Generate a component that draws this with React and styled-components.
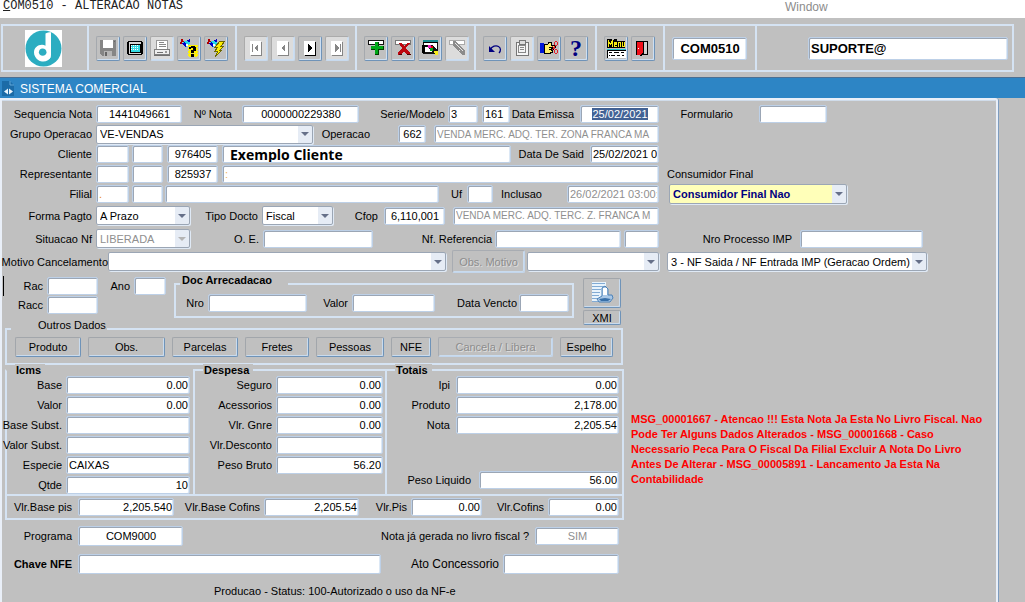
import React, { useEffect, useRef } from "react";
import styled, { createGlobalStyle } from "styled-components";

const GlobalStyle = createGlobalStyle`
  * {
    box-sizing: border-box;
  }
  body {
    margin: 0;
    background: #c0c0c0;
    color: #000;
    font-family: "Liberation Sans", Arial, sans-serif;
    font-size: 11px;
    overflow: hidden;
  }
  input, select, button {
    font-family: inherit;
    font-size: 11px;
    color: #000;
    margin: 0;
  }
`;

const MenuBar = styled.header`
  display: flex;
  align-items: flex-start;
  height: 18px;
  padding-left: 3px;
  background: #fff;
  line-height: 13px;
`;

const FormName = styled.h1`
  flex: 0 0 782px;
  margin: 0;
  font: 12px/13px "Liberation Mono", "Courier New", monospace;
  color: #222;

  &::first-letter {
    text-decoration: underline;
  }
`;

const MenuItem = styled.button`
  padding: 0;
  border: 0;
  background: none;
  color: #8c8c8c;
  font-size: 12px;
  line-height: 14px;
`;

const ToolbarArea = styled.div`
  height: 59px;
  padding: 6px 11px 5px 1px;
`;

const Toolbar = styled.div`
  display: flex;
  height: 48px;
  border: 2px solid #d5e3f3;
  border-right: 0;
`;

const ToolGroup = styled.div`
  display: flex;
  align-items: center;
  gap: 3px;
  flex: ${(p) => (p.$w ? `0 0 ${p.$w}px` : "1")};
  padding: 0 ${(p) => p.$right || 0}px 0 ${(p) => p.$left || 7}px;
  border-right: 2px solid #d5e3f3;
`;

const ToolButton = styled.button`
  display: flex;
  align-items: center;
  justify-content: center;
  width: 24px;
  height: 25px;
  padding: 0;
  border: 1px solid;
  border-color: #a5a9ae #6f93b8 #6f93b8 #a5a9ae;
  border-radius: 2px;
  background: #c0c0c0;
  box-shadow: inset -1px -1px 0 #cddff2;

  &:disabled {
    background: #dcdcdc;
    border-color: #ababab #c8daee #c8daee #ababab;
  }
`;

const HelpMark = styled.span`
  font: bold 24px/22px "Liberation Serif", serif;
  color: #000080;
`;

const TitleBar = styled.div`
  display: flex;
  align-items: center;
  gap: 6px;
  height: 21px;
  padding: 1px 0 0 2px;
  border-top: 1px solid #4b6f93;
  background: #2d85c5;
  color: #fff;
`;

const Title = styled.h2`
  margin: 0;
  font-size: 12px;
  font-weight: normal;
`;

const Panel = styled.main`
  min-height: calc(100vh - 98px);
  margin-right: 27px;
  padding-top: 4px;
  border-left: 2px solid #e9eff8;
  border-top: 2px solid #e9eff8;
  border-right: 2px solid #e9eff8;
  border-top-right-radius: 3px;
  box-shadow: 1px 0 0 #7d9cbf, inset 0 1px 0 #d0dcea;
`;

const Columns = styled.div`
  display: flex;
`;

const LeftColumn = styled.div`
  flex: 0 0 657px;
  min-width: 0;
`;

const RightColumn = styled.div`
  flex: 1;
  padding-left: 8px;
`;

const Row = styled.div`
  display: flex;
  align-items: center;
  height: ${(p) => p.$h || 20}px;
  margin-top: ${(p) => p.$top || 0}px;
`;

const Label = styled.label`
  display: flex;
  justify-content: flex-end;
  flex: none;
  width: ${(p) => (p.$w ? `${p.$w}px` : "auto")};
  padding-right: ${(p) => (p.$pad === undefined ? 4 : p.$pad)}px;
  font-size: ${(p) => (p.$big ? 12 : 11)}px;
  font-weight: ${(p) => (p.$bold ? "bold" : "normal")};
  white-space: nowrap;
`;

const Input = styled.input`
  flex: ${(p) => (p.$w ? `0 0 ${p.$w}px` : "1")};
  min-width: 0;
  width: ${(p) => p.$w || 0}px;
  height: ${(p) => p.$h || 18}px;
  margin-left: ${(p) => p.$ml || 0}px;
  padding: 0 1px 0 2px;
  border: 1px solid #bdd0e7;
  border-radius: 2px;
  outline: 0;
  background: #fff;
  box-shadow: inset 1px 1px 0 #9ba6b5, inset -1px 0 0 #dce8f5;
  text-align: ${(p) => p.$align || "left"};
  color: ${(p) => (p.$dim ? "#8f8f8f" : p.$ink || "#000")};

  &::selection {
    background: rgba(64, 96, 148, 0.99);
    color: #fff;
  }
`;

const DescriptionInput = styled(Input)`
  font-size: 10px;
`;

const ToolInput = styled(Input)`
  font-size: 13px;
  font-weight: bold;
`;

const ClientInput = styled(Input)`
  padding-left: 7px;
  font-family: "Open Sans", "Noto Sans", sans-serif;
  font-size: 14px;
  font-weight: bold;
`;

const Select = styled.select`
  appearance: none;
  flex: ${(p) => (p.$w ? `0 0 ${p.$w}px` : "1")};
  min-width: 0;
  width: ${(p) => p.$w || 0}px;
  height: ${(p) => p.$h || 19}px;
  margin-left: ${(p) => p.$ml || 0}px;
  padding: 0 16px 0 3px;
  border: 1px solid #9ba6b5;
  border-radius: 2px;
  outline: 0;
  background:
    url("data:image/svg+xml,%3Csvg xmlns='http://www.w3.org/2000/svg' width='8' height='4'%3E%3Cpath d='M0 0h8L4 4z' fill='%23667089'/%3E%3C/svg%3E") no-repeat right 3px center,
    linear-gradient(to left, #e6ecf5 14px, transparent 14px),
    ${(p) => (p.$yellow ? "#ffffb9" : "#fff")};
  box-shadow: 1px 1px 0 #dfe9f5;
  color: ${(p) => (p.$yellow ? "#000080" : "#000")};
  font-weight: ${(p) => (p.$yellow ? "bold" : "normal")};

  &:disabled {
    background:
      url("data:image/svg+xml,%3Csvg xmlns='http://www.w3.org/2000/svg' width='8' height='4'%3E%3Cpath d='M0 0h8L4 4z' fill='%23b4b4b4'/%3E%3C/svg%3E") no-repeat right 3px center,
      linear-gradient(to left, #e6ecf5 14px, transparent 14px),
      #fff;
    color: #8f8f8f;
    opacity: 1;
  }
`;

const Button = styled.button`
  flex: ${(p) => (p.$w ? `0 0 ${p.$w}px` : "none")};
  width: ${(p) => p.$w}px;
  height: ${(p) => p.$h || 20}px;
  margin-left: ${(p) => p.$ml || 0}px;
  padding: 0;
  border: 1px solid;
  border-color: #a2a6ab #6f93b8 #6f93b8 #a2a6ab;
  border-radius: 2px;
  background: #c0c0c0;
  box-shadow: inset -1px -1px 0 #c9dbee;

  &:disabled {
    border-color: #a8acb2 #c3d6ec #c3d6ec #a8acb2;
    color: #8d8d8d;
    text-shadow: 1px 1px 0 #dedede;
  }
`;

const CollectionRow = styled.div`
  display: flex;
  align-items: flex-start;
  height: 46px;
`;

const RacFields = styled.div`
  width: 164px;
  padding-top: 3px;
  flex: none;
`;

const CursorRow = styled(Row)`
  margin-left: 1px;
  border-left: 1px solid #000;
`;

const RacRow = styled(Row)`
  margin-left: 2px;
`;

const Fieldset = styled.fieldset`
  min-width: 0;
  margin: 0;
  padding: 0;
  border: 2px solid #d5e3f3;
`;

const RaisedLegend = styled.legend`
  margin-left: ${(p) => p.$ml}px;
  padding: 0 ${(p) => p.$right}px 8px ${(p) => p.$left}px;
  font-weight: ${(p) => (p.$bold ? "bold" : "normal")};
  line-height: 12px;
`;

const Collection = styled(Fieldset)`
  flex: 0 0 400px;
  margin: 1px 0 0 8px;
  padding-bottom: 4px;
`;

const XmlButtons = styled.div`
  display: flex;
  flex-direction: column;
  gap: 2px;
  padding: 5px 0 0 9px;
`;

const IconButton = styled(Button)`
  display: flex;
  align-items: center;
  justify-content: center;
  flex: none;
`;

const Details = styled.div`
  flex: 0 0 622px;
  padding-left: 3px;
`;

const OtherData = styled(Fieldset)`
  margin-right: 1px;
  padding-bottom: 6px;
`;

const ButtonRow = styled.div`
  display: flex;
  gap: 7px;
  margin-top: -2px;
  padding: 0 7px 0 8px;
`;

const Groups = styled.div`
  display: flex;
  height: 130px;
  margin-top: -1px;
`;

const Group = styled(Fieldset)`
  flex: ${(p) => (p.$w ? `0 0 ${p.$w}px` : "1")};
  border-right-width: ${(p) => (p.$last ? 2 : 0)}px;
  border-bottom: 0;
  border-top-color: ${(p) => (p.$flush ? "transparent" : "#d5e3f3")};
`;

const Legend = styled.legend`
  margin-left: 8px;
  padding: 0 4px 0 1px;
  background: #c0c0c0;
  font-size: 11px;
  font-weight: bold;
  line-height: 12px;
`;

const GroupRows = styled.div`
  margin-top: -1px;
`;

const TaxFrame = styled.div`
  padding: 1px 0;
  border: 2px solid #d5e3f3;
`;

const Message = styled.p`
  flex: 0 1 356px;
  margin: 93px 0 0 7px;
  color: #ff0000;
  font-weight: bold;
  line-height: 15px;
`;

const Status = styled.p`
  margin: 10px 0 0 209px;
  line-height: 14px;
`;

// label + text box pair, every box on the form is one of these
function Field({ id, label, lw = 94, pad, bold, big, ...input }) {
  return (
    <>
      <Label htmlFor={id} $w={lw} $pad={pad} $bold={bold} $big={big}>{label}</Label>
      <Input id={id} {...input} />
    </>
  );
}

function Combo({ id, label, lw = 94, pad, value, ...rest }) {
  return (
    <>
      {label && <Label htmlFor={id} $w={lw} $pad={pad}>{label}</Label>}
      <Select id={id} {...rest}>
        <option>{value}</option>
      </Select>
    </>
  );
}

const Svg = ({ size = 18, children }) => (
  <svg width={size} height={size} viewBox={`0 0 ${size} ${size}`} shapeRendering="crispEdges" aria-hidden="true">
    {children}
  </svg>
);

const Logo = () => (
  <svg width="37" height="37" viewBox="0 0 37 37" role="img" aria-label="Logo">
    <rect width="37" height="37" fill="#fff" />
    <circle cx="18.5" cy="18.5" r="18" fill="#2cadc1" />
    <path d="M20.5 3.5C22 2.5 24 2.2 26 2.2V25c0 2-1 3.500-3 4.500C20 31 16.500 31 13.500 29.500 10.500 28 9 25.500 9 22.500 9 18 12.500 14.800 17 14.800c1.300 0 2.500.3 3.500.9z" fill="#fff" />
    <path d="M17.500 18.500c2.300 0 4 1.600 4 3.700s-1.700 3.600-3.800 3.600c-2.200 0-3.800-1.500-3.800-3.600s1.500-3.700 3.600-3.700z" fill="#2cadc1" />
    <path d="M10 26c3 3.500 8 3.500 11 1.500l5-1c-1.500 4-5.500 5.500-9 5-3-.3-6-2.500-7-5.500z" fill="#fff" />
  </svg>
);

const SaveIcon = () => (
  <Svg>
    <path d="M1 1h16v16H3l-2-2z" fill="#858585" />
    <path d="M4 1h10v8H4z" fill="#fff" />
    <path d="M5 12h8v5H5z" fill="#b5b5b5" />
    <path d="M6 13h2v4H6zM15 2h1v1h-1z" fill="#666" />
  </Svg>
);

const ScreenIcon = () => (
  <Svg>
    <path d="M2 2h14v1h1v12h-1v1H2v-1H1V3h1z" fill="#000" />
    <path d="M3 3h12v12H3z" fill="#d8d8d8" />
    <path d="M4 5h10v8H4z" fill="#32dce4" stroke="#000" />
    <path d="M5 6.500h8M5 8.500h8M5 10.500h8" stroke="#fff" strokeDasharray="1 1" />
  </Svg>
);

const PrinterIcon = () => (
  <Svg>
    <path d="M4 1h10l1 9H3z" fill="#fff" stroke="#999" />
    <path d="M6 3.500h5M6 5.500h7M6 7.500h7" stroke="#888" />
    <path d="M1.500 10.500h15v5h-15z" fill="#eee" stroke="#808080" />
    <path d="M1 16.500h16M4 13.500h6" stroke="#707070" />
    <path d="M12 12h2v2h-2z" fill="#999" />
  </Svg>
);

const Torch = () => (
  <>
    <path d="M1 0h2v2h2v2H3V3H2v2H0V3h1z" fill="#b00000" />
    <path d="M3 3l5-2 2 3-4 4z" fill="#25d9e5" />
    <path d="M7 1l3-1v3H8zM2 4l3-1 2 3-2 2z" fill="#0000c8" />
    <path d="M6 5h2v2H6z" fill="#fff" />
  </>
);

const QueryIcon = () => (
  <Svg>
    <Torch />
    <path d="M8 6h10v12H8z" fill="#fff200" />
    <path d="M8 8.500h10M8 11.500h10M8 14.500h10M8 17.500h10" stroke="#c0c0c0" strokeDasharray="1 2" />
    <path d="M9 8h2V7h4v1h1v4h-2v2h-3v-3h2V9h-2v1H9zM11 15h3v3h-3z" fill="#000" />
  </Svg>
);

const ExecuteIcon = () => (
  <Svg>
    <Torch />
    <path d="M13 2h5l-4 5h3l-4 4h2l-7 7 3-6H8l3-4H8z" fill="#ffee00" stroke="#6d6900" strokeWidth="1" />
  </Svg>
);

const PageIcon = ({ off, left, bar }) => {
  const ink = off ? "#858585" : "#000";
  return (
    <Svg>
      <path d="M4 3h11v14H4z" fill={ink} />
      <path d="M3 2h11v14H3z" fill="#fff" />
      <path d={left ? "M11 5v8L7 9z" : "M7 5v8l4-4z"} fill={ink} />
      {bar && <path d={left ? "M5 5h1v8H5z" : "M12 5h1v8h-1z"} fill={ink} />}
    </Svg>
  );
};

const AddIcon = () => (
  <Svg>
    <path d="M1.500 1.500h15v4h-15z" fill="#fff" stroke="#111" />
    <path d="M8 3h4v4h5v4h-5v5H8v-5H4V7h4z" fill="#003c00" />
    <path d="M8 3h3v4h5v3h-5v5H8v-5H4V7h4z" fill="#00a818" />
  </Svg>
);

const RemoveIcon = () => (
  <Svg>
    <path d="M1.500 1.500h15v4h-15z" fill="#fff" stroke="#777" />
    <path d="M5 4h3l2 3 3-3h3l-4 5 4 5v2h-3l-3-4-3 4H4v-2l4-5z" fill="#bd0710" />
    <path d="M5 15h3v1H4zM13 15h4v1h-4z" fill="#4a0000" />
  </Svg>
);

const ClearIcon = () => (
  <Svg>
    <path d="M2 1h15v14H2z" fill="#111" />
    <path d="M3 3h13v10H3z" fill="#fff" />
    <path d="M2 1h15v2H2z" fill="#178b91" />
    <path d="M2 3h15v1H2z" fill="#000" />
    <path d="M1 6h8v2H4v6H1z" fill="#000" />
    <path d="M6 6h5l6 6-4 3-6-6z" fill="#111" />
    <path d="M7 6h3v3H7z" fill="#f01cc2" />
    <path d="M10 7h2v2h-2z" fill="#e00" />
    <path d="M9 9h3v3H9z" fill="#00a818" />
    <path d="M13 12h4v4h-3z" fill="#f6ec1c" />
  </Svg>
);

const LockIcon = () => (
  <Svg>
    <path d="M1.500 1.500h15v4h-15z" fill="#fff" stroke="#aaa" />
    <path d="M5 2h3l9 10v4h-3L5 6z" fill="#8c8c8c" />
    <path d="M7 4l8 8M12 11l-2 2" stroke="#e8e8e8" />
  </Svg>
);

const UndoIcon = () => (
  <svg width="18" height="18" viewBox="0 0 18 18" aria-hidden="true">
    <path d="M4 11c2-4 6-5 8.500-3.500S15 12 13 14" fill="none" stroke="#000080" strokeWidth="1.300" />
    <path d="M3 7v6h6z" fill="#000080" />
  </svg>
);

const PasteIcon = () => (
  <Svg>
    <path d="M3 3h12v13H3z" fill="#f5f5f5" stroke="#777" />
    <path d="M6 1h6v4H6z" fill="#ddd" stroke="#777" />
    <path d="M5.500 6.500h7v7h-7zM7 8.500h4M7 10.500h4" fill="none" stroke="#888" />
  </Svg>
);

const CutIcon = () => (
  <Svg>
    <path d="M0 4h4v10H0z" fill="#0018d8" />
    <path d="M4 5h4l1-2h2v3h4v2h-4v1h2v1h-2v1h1v2h-2v1H4z" fill="#fff06a" stroke="#000" />
    <path d="M9 8.500h3M9 10.500h2" stroke="#000" />
    <path d="M12 7l4 4M12 11l4-5" stroke="#e0202c" />
    <circle cx="16" cy="4.500" r="1.700" fill="none" stroke="#e0202c" />
    <circle cx="16" cy="12.500" r="1.700" fill="none" stroke="#e0202c" />
  </Svg>
);

const MenuIcon = () => (
  <Svg size={20}>
    <path d="M1 1h5l1 2 1-2h3v2h8v7H1z" fill="#000" />
    <path d="M2 9V2h1l1 3h1l1-3h1v7H6V5L5 7H4L3 5v4zM8 9V4h3v3H9v1h2v1zM12 9V4h3v5h-1V5h-1v4zM16 4h1v4h1V4h1v5h-3z" fill="#f8ec12" />
    <path d="M1 11h19v9H1z" fill="#000" />
    <path d="M1 11h19v1H1z" fill="#20c7d0" />
    <path d="M2 13h18v7H2z" fill="#fff" />
    <path d="M3 14.500h3M8 14.500h5M15 14.500h3M3 17.500h1M5 17.500h4M11 17.500h3M16 17.500h2" stroke="#000" />
  </Svg>
);

const ExitIcon = () => (
  <Svg>
    <path d="M2 2h12v14H2z" fill="#000" />
    <path d="M10 3h3v12h-3z" fill="#d0d0d0" />
    <path d="M3 3h6v11l-3 2H3z" fill="#f0101a" />
    <path d="M9 3h1v11l-3 3H6v-1l3-2z" fill="#000" />
    <path d="M4 9h1v1H4z" fill="#fff" />
  </Svg>
);

const FormIcon = () => (
  <svg width="12" height="15" viewBox="0 0 12 15" aria-hidden="true">
    <path d="M0 0h8l4 4v11H0z" fill="#1b6ba7" />
    <path d="M8 0v4h4" fill="none" stroke="#61a8da" />
    <path d="M6 7.500v6L2 10.500zM7 7.500l4 3-4 3z" fill="#e9f4fc" />
  </svg>
);

const XmlIcon = () => (
  <svg width="24" height="24" viewBox="0 0 24 24" aria-hidden="true">
    <path d="M2 1h14v20H2z" fill="#e8f3fc" />
    <path d="M2 2.500h13M2 5.500h12M2 8.500h9M2 11.500h8M2 14.500h7M2 17.500h6M2 20.500h7" stroke="#82abd4" />
    <path d="M12 7l3-2 3 3v6h4l1 3-3 4H9l-2-3 5-3z" fill="#a9c7e6" stroke="#4c82b8" />
    <path d="M13 7h4v7h-4z" fill="#fff" />
    <path d="M9 18l6-1 6 1-3 2h-7z" fill="#386fa8" />
  </svg>
);

const messageText =
  "MSG_00001667 - Atencao !!! Esta Nota Ja Esta No Livro Fiscal. Nao Pode Ter Alguns Dados Alterados - MSG_00001668 - Caso Necessario Peca Para O Fiscal Da Filial Excluir A Nota Do Livro Antes De Alterar - MSG_00005891 - Lancamento Ja Esta Na Contabilidade";

const icms = [
  ["Base", "0.00"],
  ["Valor", "0.00"],
  ["Base Subst.", ""],
  ["Valor Subst.", ""],
  ["Especie", "CAIXAS", "left"],
  ["Qtde", "10"],
];

const despesa = [
  ["Seguro", "0.00"],
  ["Acessorios", "0.00"],
  ["Vlr. Gnre", "0.00"],
  ["Vlr.Desconto", ""],
  ["Peso Bruto", "56.20"],
];

const totais = [
  ["Ipi", "0.00"],
  ["Produto", "2,178.00"],
  ["Nota", "2,205.54"],
];

const tabs = [
  ["Produto", 66],
  ["Obs.", 77],
  ["Parcelas", 66],
  ["Fretes", 64],
  ["Pessoas", 68],
  ["NFE", 40],
  ["Cancela / Libera", 115],
  ["Espelho", 53],
];

function MainToolbar() {
  return (
    <ToolbarArea>
      <Toolbar>
        <ToolGroup $w={86} $left={22}><Logo /></ToolGroup>
        <ToolGroup $w={148}>
          <ToolButton aria-label="Salvar"><SaveIcon /></ToolButton>
          <ToolButton aria-label="Tela"><ScreenIcon /></ToolButton>
          <ToolButton disabled aria-label="Imprimir"><PrinterIcon /></ToolButton>
          <ToolButton aria-label="Consultar"><QueryIcon /></ToolButton>
          <ToolButton aria-label="Executar"><ExecuteIcon /></ToolButton>
        </ToolGroup>
        <ToolGroup $w={120}>
          <ToolButton disabled aria-label="Primeiro"><PageIcon off left bar /></ToolButton>
          <ToolButton disabled aria-label="Anterior"><PageIcon off left /></ToolButton>
          <ToolButton aria-label="Proximo"><PageIcon /></ToolButton>
          <ToolButton disabled aria-label="Ultimo"><PageIcon off bar /></ToolButton>
        </ToolGroup>
        <ToolGroup $w={119}>
          <ToolButton aria-label="Inserir"><AddIcon /></ToolButton>
          <ToolButton aria-label="Remover"><RemoveIcon /></ToolButton>
          <ToolButton aria-label="Limpar"><ClearIcon /></ToolButton>
          <ToolButton disabled aria-label="Bloquear"><LockIcon /></ToolButton>
        </ToolGroup>
        <ToolGroup $w={121}>
          <ToolButton aria-label="Desfazer"><UndoIcon /></ToolButton>
          <ToolButton disabled aria-label="Colar"><PasteIcon /></ToolButton>
          <ToolButton aria-label="Recortar"><CutIcon /></ToolButton>
          <ToolButton aria-label="Ajuda"><HelpMark>?</HelpMark></ToolButton>
        </ToolGroup>
        <ToolGroup $w={68}>
          <ToolButton aria-label="Menu"><MenuIcon /></ToolButton>
          <ToolButton aria-label="Sair"><ExitIcon /></ToolButton>
        </ToolGroup>
        <ToolGroup $w={92}>
          <ToolInput aria-label="Programa atual" $w={75} $h={23} $align="center" defaultValue="COM0510" />
        </ToolGroup>
        <ToolGroup $left={51} $right={4}>
          <ToolInput aria-label="Usuario" $h={23} defaultValue="SUPORTE@" />
        </ToolGroup>
      </Toolbar>
    </ToolbarArea>
  );
}

export default function App() {
  const emissao = useRef(null);

  useEffect(() => {
    emissao.current.focus();
    emissao.current.select();
  }, []);

  return (
    <>
      <GlobalStyle />
      <MenuBar>
        <FormName>COM0510 - ALTERACAO NOTAS</FormName>
        <MenuItem>Window</MenuItem>
      </MenuBar>
      <MainToolbar />
      <TitleBar>
        <FormIcon />
        <Title>SISTEMA COMERCIAL</Title>
      </TitleBar>

      <Panel>
        <Columns>
          <LeftColumn>
            <Row>
              <Field id="sequencia" label="Sequencia Nota" $w={86} $align="center" defaultValue="1441049661" />
              <Field id="nota" label="Nº Nota" lw={60} pad={10} $w={117} $align="center" defaultValue="0000000229380" />
              <Field id="serie" label="Serie/Modelo" lw={89} pad={3} $w={30} defaultValue="3" />
              <Input aria-label="Modelo" $w={28} $ml={4} defaultValue="161" />
              <Label htmlFor="emissao" $w={70} $pad={6}>Data Emissa</Label>
              <Input id="emissao" ref={emissao} $align="center" defaultValue="25/02/2021" />
            </Row>
            <Row>
              <Combo id="grupo" label="Grupo Operacao" $w={217} value="VE-VENDAS" />
              <Field id="operacao" label="Operacao" lw={85} pad={28} $w={28} $align="center" defaultValue="662" />
              <DescriptionInput aria-label="Descricao da operacao" $ml={8} $dim defaultValue="VENDA MERC. ADQ. TER. ZONA FRANCA MA" />
            </Row>
            <Row>
              <Field id="cliente" label="Cliente" $w={33} />
              <Input aria-label="Cliente 2" $w={31} $ml={3} />
              <Input aria-label="Codigo do cliente" $w={51} $ml={4} $align="center" defaultValue="976405" />
              <ClientInput aria-label="Nome do cliente" $w={289} $ml={4} defaultValue="Exemplo Cliente" />
              <Field id="saida" label="Data De Said" lw={79} pad={6} defaultValue="25/02/2021 00" />
            </Row>
            <Row>
              <Field id="representante" label="Representante" $w={33} />
              <Input aria-label="Representante 2" $w={31} $ml={3} />
              <Input aria-label="Codigo do representante" $w={51} $ml={4} $align="center" defaultValue="825937" />
              <Input aria-label="Nome do representante" $ml={4} $ink="#f0b060" defaultValue=":" />
            </Row>
            <Row>
              <Field id="filial" label="Filial" $w={33} $ink="#e88a20" defaultValue="." />
              <Input aria-label="Filial 2" $w={31} $ml={3} />
              <Input aria-label="Nome da filial" $w={274} $ml={2} />
              <Field id="uf" label="Uf" lw={28} pad={5} $w={26} />
              <Field id="inclusao" label="Inclusao" lw={74} pad={25} $dim defaultValue="26/02/2021 03:00:" />
            </Row>
            <Row $h={23}>
              <Combo id="pagto" label="Forma Pagto" $w={94} value="A Prazo" />
              <Combo id="docto" label="Tipo Docto" lw={72} $w={71} value="Fiscal" />
              <Field id="cfop" label="Cfop" lw={51} pad={6} $w={61} $align="center" defaultValue="6,110,001" />
              <DescriptionInput aria-label="Descricao do cfop" $ml={8} $dim defaultValue="VENDA MERC. ADQ. TERC. Z. FRANCA M" />
            </Row>
            <Row $h={23}>
              <Combo id="situacao" label="Situacao Nf" $w={94} value="LIBERADA" disabled />
              <Field id="oe" label="O. E." lw={73} $w={110} />
              <Field id="referencia" label="Nf. Referencia" lw={122} pad={3} $w={126} />
              <Input aria-label="Serie da referencia" $ml={3} />
            </Row>
            <Row $h={23}>
              <Combo id="motivo" label="Motivo Cancelamento" lw={106} pad={0} $w={338} value="" />
              <Button disabled $w={73} $h={23} $ml={6}>Obs. Motivo</Button>
              <Combo id="tipomotivo" aria-label="Tipo do motivo" $ml={2} value="" />
            </Row>
          </LeftColumn>

          <RightColumn>
            <Row>
              <Field id="formulario" label="Formulario" lw={92} pad={26} $w={68} />
            </Row>
            <Row $top={40}>
              <Label htmlFor="consumidor">Consumidor Final</Label>
            </Row>
            <Row>
              <Combo id="consumidor" $w={178} $h={20} $ml={2} $yellow value="Consumidor Final Nao" />
            </Row>
            <Row $h={23} $top={23}>
              <Field id="processo" label="Nro Processo IMP" lw={133} pad={8} $w={123} />
            </Row>
            <Row $h={23}>
              <Combo id="tipoprocesso" aria-label="Tipo de processo" $w={260} value="3 - NF Saida / NF Entrada IMP (Geracao Ordem)" />
            </Row>
          </RightColumn>
        </Columns>

        <CollectionRow>
          <RacFields>
            <CursorRow>
              <Field id="rac" label="Rac" lw={43} $w={51} />
              <Field id="ano" label="Ano" lw={36} $w={32} />
            </CursorRow>
            <RacRow $h={18}>
              <Field id="racc" label="Racc" lw={43} $w={51} />
            </RacRow>
          </RacFields>
          <Collection>
            <RaisedLegend $ml={4} $left={2} $right={16} $bold>Doc Arrecadacao</RaisedLegend>
            <Row $h={18}>
              <Field id="nro" label="Nro" lw={32} $w={99} />
              <Field id="valor" label="Valor" lw={45} $w={83} />
              <Field id="vencto" label="Data Vencto" lw={84} pad={2} $w={50} />
            </Row>
          </Collection>
          <XmlButtons>
            <IconButton $w={38} $h={30} aria-label="Gerar XML"><XmlIcon /></IconButton>
            <IconButton $w={38} $h={15}>XMI</IconButton>
          </XmlButtons>
        </CollectionRow>

        <Columns>
          <Details>
            <OtherData>
              <RaisedLegend $ml={4} $left={27} $right={1}>Outros Dados</RaisedLegend>
              <ButtonRow>
                {tabs.map(([name, width]) => (
                  <Button key={name} $w={width} disabled={name === "Cancela / Libera"}>{name}</Button>
                ))}
              </ButtonRow>
            </OtherData>

            <Groups>
              <Group $w={188} $flush>
                <Legend>Icms</Legend>
                <GroupRows>
                  {icms.map(([name, value, align]) => (
                    <Row key={name}>
                      <Field id={`icms-${name}`} label={name} lw={59} $w={124} $align={align || "right"} defaultValue={value} />
                    </Row>
                  ))}
                </GroupRows>
              </Group>
              <Group $w={192}>
                <Legend>Despesa</Legend>
                <GroupRows>
                  {despesa.map(([name, value]) => (
                    <Row key={name}>
                      <Field id={`despesa-${name}`} label={name} lw={81} $w={107} $align="right" defaultValue={value} />
                    </Row>
                  ))}
                </GroupRows>
              </Group>
              <Group $last>
                <Legend>Totais</Legend>
                <GroupRows>
                  {totais.map(([name, value]) => (
                    <Row key={name}>
                      <Field id={`totais-${name}`} label={name} lw={69} pad={6} $w={163} $align="right" defaultValue={value} />
                    </Row>
                  ))}
                  <Row $top={35}>
                    <Field id="liquido" label="Peso Liquido" lw={92} pad={8} $w={140} $align="right" defaultValue="56.00" />
                  </Row>
                </GroupRows>
              </Group>
            </Groups>

            <TaxFrame>
              <Row>
                <Field id="basepis" label="Vlr.Base pis" lw={71} pad={6} $w={96} $align="right" defaultValue="2,205.540" />
                <Field id="basecofins" label="Vlr.Base Cofins" lw={90} $w={95} $align="right" defaultValue="2,205.54" />
                <Field id="pis" label="Vlr.Pis" lw={52} $w={71} $align="right" defaultValue="0.00" />
                <Field id="cofins" label="Vlr.Cofins" lw={66} $w={71} $align="right" defaultValue="0.00" />
              </Row>
            </TaxFrame>

            <Row $top={6}>
              <Field id="programa" label="Programa" lw={73} pad={6} $w={105} $h={20} $align="center" defaultValue="COM9000" />
              <Field id="livro" label="Nota já gerada no livro fiscal ?" lw={352} pad={6} $w={84} $align="center" $dim defaultValue="SIM" />
            </Row>
            <Row $top={8}>
              <Field id="chave" label="Chave NFE" bold lw={73} pad={6} $w={303} $h={20} />
              <Field id="ato" label="Ato Concessorio" big lw={122} $w={116} $h={20} />
            </Row>
            <Status>Producao - Status: 100-Autorizado o uso da NF-e</Status>
          </Details>
          <Message>{messageText}</Message>
        </Columns>
      </Panel>
    </>
  );
}
